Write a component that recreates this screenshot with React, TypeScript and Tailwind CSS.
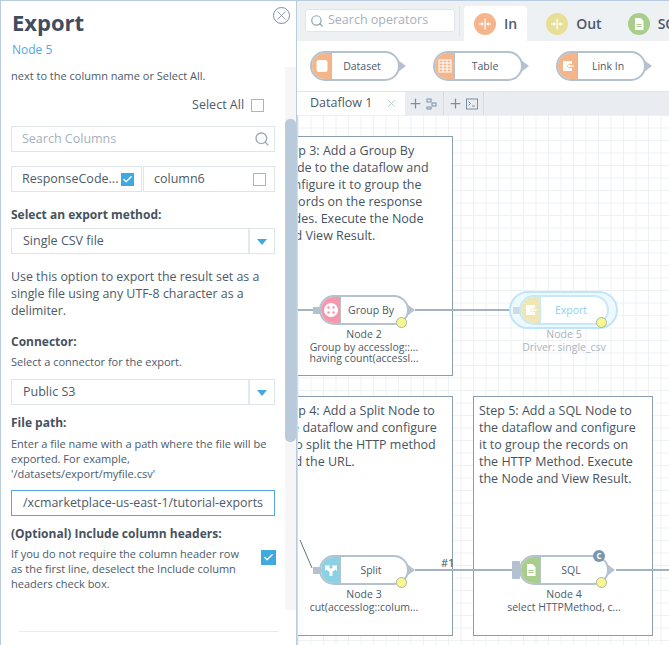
import React from "react";
import { Search, X, Plus, Check } from "lucide-react";

const Arrows = ({ size = 14 }: { size?: number }) => (
  <svg width={size} height={size} viewBox="0 0 14 14" fill="none" stroke="white" strokeWidth="1.2">
    <path d="M7 1.500v11M1 7h3.600M13 7H9.400M3.400 5.600 5 7 3.400 8.400M10.600 5.600 9 7l1.600 1.400" />
  </svg>
);
const FileIcon = ({ size = 14 }: { size?: number }) => (
  <svg width={size} height={size} viewBox="0 0 14 14" fill="white">
    <path d="M3 1h5.500L11.500 4v9H3z" />
    <path d="M4.500 7.500h5M4.500 9.500h5" stroke="#a9cd8b" strokeWidth="1" />
  </svg>
);
const LinkIcon = ({ color }: { color: string }) => (
  <svg width="14" height="14" viewBox="0 0 14 14" fill="none">
    <path d="M2 2h9v3H8L6 7l2 2h3v3H2z" fill="white" />
    <path d="M6 7l3-2.500V6h4v2H9v1.500z" fill="white" stroke={color} strokeWidth="0.6" />
  </svg>
);
const TableIcon = () => (
  <svg width="14" height="14" viewBox="0 0 14 14" fill="none" stroke="white" strokeWidth="1">
    <rect x="1" y="1" width="12" height="12" />
    <path d="M1 4h12M1 7h12M1 10h12M5 1v12M9 1v12" />
  </svg>
);
const DbIcon = () => (
  <svg width="14" height="14" viewBox="0 0 14 14" fill="white">
    <rect x="1.500" y="1" width="11" height="12" rx="2.500" />
  </svg>
);
const GroupIcon = () => (
  <svg width="16" height="16" viewBox="0 0 16 16">
    <circle cx="8" cy="8" r="7" fill="white" />
    <g fill="#f797ab">
      <circle cx="5.500" cy="5.500" r="1.200" />
      <circle cx="10.500" cy="5.500" r="1.200" />
      <circle cx="5.500" cy="10.500" r="1.200" />
      <circle cx="10.500" cy="10.500" r="1.200" />
    </g>
  </svg>
);
const SplitIcon = () => (
  <svg width="14" height="14" viewBox="0 0 14 14" fill="white">
    <path d="M5.500 13V9L2.500 6.500 1 8V2.500h5.500L5 4l2 2 2-2-1.500-1.500H13V8l-1.500-1.500L8.500 9v4z" />
  </svg>
);

const CheckBox = ({ checked, className = "" }: { checked?: boolean; className?: string }) =>
  checked ? (
    <span className={`flex items-center justify-center w-[13px] h-[13px] shrink-0 bg-[#3fa9e0] ${className}`}>
      <Check size={11} color="white" strokeWidth={3} />
    </span>
  ) : (
    <span className={`block w-[13px] h-[13px] shrink-0 border border-[#8dbde2] bg-white ${className}`} />
  );

const Caret = () => (
  <span className="flex items-center justify-center w-[26px] h-full border-l-2 border-[#e3e8ed]">
    <span className="block w-0 h-0 border-l-[5px] border-r-[5px] border-t-[6px] border-l-transparent border-r-transparent border-t-[#3fa9e0] mt-[2px]" />
  </span>
);

const Select = ({ value }: { value: string }) => (
  <div className="flex items-center h-[26px] border border-[#dfe4ea] bg-white">
    <span className="flex-1 pl-[11px] text-[12.5px] text-[#4c5a69]">{value}</span>
    <Caret />
  </div>
);

const Label = ({ children, className = "" }: { children: React.ReactNode; className?: string }) => (
  <div className={`text-[12px] leading-[17px] font-bold text-[#46535f] ${className}`}>{children}</div>
);

function Panel() {
  return (
    <aside className="relative z-10 flex flex-col w-[297px] h-full shrink-0 border-t border-l border-r border-[#b9cbde] bg-white">
      <div className="relative h-[66px] shrink-0 pl-[11px]">
        <div className="pt-[3px] text-[22px] leading-[36px] font-bold text-[#3f4e5e]">Export</div>
        <div className="mt-[1px] text-[12px] leading-[17px] text-[#52a7e0]">Node 5</div>
        <span className="absolute right-[6px] top-[6px] flex items-center justify-center w-[17px] h-[17px] rounded-full border-[1.5px] border-[#7b8ea3]">
          <X size={15} color="#7b8ea3" strokeWidth={1.3} />
        </span>
      </div>
      <div className="flex h-[543px] shrink-0">
        <div className="w-[285px] pl-[10px] pr-[10px] text-[#4c5a69]">
          <div className="text-[11px] leading-[17px]">next to the column name or Select All.</div>
          <div className="flex items-center justify-end gap-[7px] mt-[12px] pr-[11px] h-[18px] text-[12.5px]">
            <span>Select All</span>
            <CheckBox />
          </div>
          <div className="flex items-center justify-between mt-[12px] h-[26px] pl-[10px] pr-[4px] border border-[#dfe4ea] text-[12.5px] text-[#a6b1bc]">
            <span>Search Columns</span>
            <Search size={16} color="#98a9b8" />
          </div>
          <div className="flex gap-[1px] mt-[14px] h-[26px] text-[12.5px]">
            <div className="flex items-center justify-between w-[131px] pl-[10px] pr-[7px] border border-[#dfe4ea]">
              <span>ResponseCode...</span>
              <CheckBox checked />
            </div>
            <div className="flex items-center justify-between flex-1 pl-[10px] pr-[8px] border border-[#dfe4ea]">
              <span>column6</span>
              <CheckBox />
            </div>
          </div>
          <Label className="mt-[14px]">Select an export method:</Label>
          <div className="mt-[5px]"><Select value="Single CSV file" /></div>
          <p className="mt-[14px] text-[12.4px] leading-[17px]">
            Use this option to export the result set as a<br />single file using any UTF-8 character as a<br />delimiter.
          </p>
          <Label className="mt-[14px]">Connector:</Label>
          <div className="mt-[3px] text-[11px] leading-[17px]">Select a connector for the export.</div>
          <div className="mt-[9px]"><Select value="Public S3" /></div>
          <Label className="mt-[9px]">File path:</Label>
          <p className="mt-[5px] text-[11px] leading-[15px] whitespace-nowrap">
            Enter a file name with a path where the file will be<br />exported. For example,<br />'/datasets/export/myfile.csv'
          </p>
          <div className="flex items-center mt-[9px] h-[26px] pl-[11px] border border-[#52a7e0] text-[12.4px] whitespace-nowrap overflow-hidden">
            /xcmarketplace-us-east-1/tutorial-exports
          </div>
          <Label className="mt-[9px]">(Optional) Include column headers:</Label>
          <div className="flex justify-between mt-[4px]">
            <p className="text-[11px] leading-[15px]">
              If you do not require the column header row<br />as the first line, deselect the Include column<br />headers check box.
            </p>
            <CheckBox checked className="w-[15px] h-[15px] mt-[4px] -mr-[1px]" />
          </div>
        </div>
        <div className="w-[11px] h-full bg-[#f6f6f6]">
          <div className="mt-[52px] h-[323px] rounded-[5px] bg-[#b9cada]" />
        </div>
      </div>
      <div className="mx-[18px] mt-[21px] border-t border-[#e7eaee]" />
    </aside>
  );
}

function Tab({ label, color, active, icon }: { label: string; color: string; active?: boolean; icon: React.ReactNode }) {
  return (
    <div className={`flex items-center gap-[8px] h-[35px] shrink-0 px-[10px] rounded-t-[4px] text-[14px] font-semibold text-[#4c5a69] ${active ? "bg-white" : ""}`}>
      <span className="flex items-center justify-center w-[22px] h-[22px] rounded-full" style={{ background: color }}>{icon}</span>
      {label}
    </div>
  );
}

function Pill({ label, color, icon, width = 90, muted, children }: { label: string; color: string; icon: React.ReactNode; width?: number; muted?: boolean; children?: React.ReactNode }) {
  return (
    <div className="relative flex h-[30px] shrink-0" style={{ width }}>
      <div className={`flex w-full h-full rounded-l-[15px] rounded-r-[15px] border-2 overflow-hidden bg-white ${muted ? "border-[#c5e9f7]" : "border-[#b4c2d0]"}`}>
        <span className={`flex items-center justify-center w-[20px] border-r shrink-0 ${muted ? "border-[#c5e9f7]" : "border-[#b4c2d0]"}`} style={{ background: color }}>{icon}</span>
        <span className={`flex-1 flex items-center justify-center pr-[6px] pt-[1px] text-[10.5px] ${muted ? "text-[#8ed0ef]" : "text-[#4c5a69]"}`}>{label}</span>
      </div>
      {!muted && (
        <span className="absolute left-full top-1/2 -translate-y-1/2 -ml-[2px] w-0 h-0 border-y-[6px] border-l-[8px] border-y-transparent border-l-[#b4c2d0]" />
      )}
      {children}
    </div>
  );
}

function CanvasNode({ left, top, label, color, icon, lines, muted, port, badge }: { left: number; top: number; label: string; color: string; icon: React.ReactNode; lines: string[]; muted?: boolean; port?: boolean; badge?: boolean }) {
  return (
    <div className="absolute w-[90px]" style={{ left, top }}>
      <span className={`absolute ${port ? "top-[6px] -left-[7px] w-[8px] h-[18px] rounded-[1px]" : "top-[12px] -left-[6px] w-[7px] h-[7px]"} ${muted ? "bg-[#cfdae3]" : "bg-[#b4c2d0]"}`} />
      <Pill label={label} color={color} icon={icon} muted={muted}>
        <span className="absolute right-[2px] -bottom-[3px] w-[11px] h-[11px] rounded-full bg-[#fbf78f] border border-[#a9b7a4]" />
        {badge && (
          <span className="absolute right-[4px] -top-[5px] flex items-center justify-center w-[12px] h-[12px] rounded-full bg-[#7b95ab] text-[8px] font-bold text-white">C</span>
        )}
      </Pill>
      <div className={`absolute -left-[20px] w-[130px] top-[34px] text-center text-[10.5px] leading-[11px] whitespace-nowrap ${muted ? "text-[#aab4bd]" : "text-[#4c5a69]"}`}>
        {lines.map((l, i) => (
          <div key={l} className={i === 0 ? "mb-[2px]" : ""}>{l}</div>
        ))}
      </div>
    </div>
  );
}

function StepBox({ left, top, height, lines, inset }: { left: number; top: number; height: number; lines: string[]; inset?: boolean }) {
  return (
    <div className={`absolute w-[180px] border border-[#8b9db0] bg-white pt-[5px] text-[12.5px] leading-[17px] text-[#46535f] whitespace-nowrap ${inset ? "pl-[6px]" : "pl-[5px]"}`} style={{ left, top, height }}>
      {lines.map((l) => (
        <div key={l}>{l}</div>
      ))}
    </div>
  );
}

export default function App() {
  return (
    <div className="flex w-[669px] h-[645px] overflow-hidden bg-white" style={{ fontFamily: '"Open Sans", sans-serif' }}>
      <Panel />
      <main className="flex flex-col flex-1 min-w-0 h-full">
        <header className="flex items-end h-[41px] shrink-0 border-t border-[#b9cbde] bg-[#eef1f4] pl-[8px] overflow-hidden">
          <div className="flex items-center gap-[4px] w-[150px] h-[23px] mb-[9px] px-[4px] rounded-[3px] border border-[#e0e5ea] bg-white text-[12.5px] text-[#a6b1bc] shrink-0">
            <Search size={14} color="#8fa3b5" />
            Search operators
          </div>
          <span className="w-[1px] h-[30px] mx-[4px] mb-[5px] bg-[#dfe4e9] shrink-0" />
          <Tab label="In" color="#f5b58a" active icon={<Arrows />} />
          <div className="w-[9px] shrink-0" />
          <Tab label="Out" color="#e8df96" icon={<Arrows />} />
          <div className="w-[6px] shrink-0" />
          <Tab label="SQL" color="#a9cd8b" icon={<FileIcon />} />
        </header>
        <section className="flex items-center gap-[33px] h-[50px] shrink-0 pl-[13px] overflow-hidden bg-white">
          <Pill label="Dataset" color="#f5b58a" icon={<DbIcon />} />
          <Pill label="Table" color="#f5b58a" icon={<TableIcon />} />
          <Pill label="Link In" color="#f5b58a" icon={<LinkIcon color="#f5b58a" />} />
        </section>
        <nav className="flex items-stretch h-[24px] shrink-0 border-t border-[#dfe4e9] bg-[#e9edf1]">
          <div className="flex items-center justify-between w-[108px] pl-[13px] pr-[8px] bg-white text-[12.5px] font-medium text-[#4c5a69]">
            Dataflow 1
            <X size={11} color="#b9c4ce" />
          </div>
          <div className="flex items-center gap-[3px] w-[39px] pl-[3px] border-r border-[#d5dbe1]">
            <Plus size={15} color="#7b8ea3" strokeWidth={2} />
            <svg width="11" height="12" viewBox="0 0 11 12" fill="none" stroke="#7b8ea3"><rect x="1" y="1" width="4" height="3" /><rect x="6" y="5" width="4" height="3" /><rect x="1" y="9" width="4" height="2" /></svg>
          </div>
          <div className="flex items-center gap-[3px] w-[40px] pl-[4px] border-r border-[#d5dbe1]">
            <Plus size={15} color="#7b8ea3" strokeWidth={2} />
            <svg width="12" height="12" viewBox="0 0 12 12" fill="none" stroke="#7b8ea3"><rect x="0.5" y="1" width="11" height="10" /><path d="M2.500 3.500 4.500 5.500 2.500 7.500M6 8h3" /></svg>
          </div>
        </nav>
        <div className="relative flex-1 overflow-hidden bg-white bg-[linear-gradient(#eef1f3_1px,transparent_1px),linear-gradient(90deg,#eef1f3_1px,transparent_1px)] bg-[size:12.5px_12.5px] border-l border-[#d5dbe1]">
          <StepBox left={-25} top={21} height={240} inset lines={["Step 3: Add a Group By", "Node to the dataflow and", "configure it to group the", "records on the response", "codes. Execute the Node", "and View Result."]} />
          <StepBox left={-25} top={281} height={240} inset lines={["Step 4: Add a Split Node to", "the dataflow and configure", "it to split the HTTP method", "and the URL."]} />
          <StepBox left={175} top={281} height={240} lines={["Step 5: Add a SQL Node to", "the dataflow and configure", "it to group the records on", "the HTTP Method. Execute", "the Node and View Result."]} />
          <svg className="absolute inset-0" width="372" height="530" fill="none" stroke="#a3b3c2">
            <path d="M0 195h15M117 195h97M117 455h97M318 455h54" strokeWidth="2" />
            <path d="M2 425 14 453" strokeWidth="1" stroke="#66727e" />
          </svg>
          <div className="absolute left-[143px] top-[441px] text-[11px] leading-[14px] text-[#46535f]">#1</div>
          <CanvasNode left={21} top={180} label="Group By" color="#f797ab" icon={<GroupIcon />} lines={["Node 2", "Group by accesslog::...", "having count(accessl..."]} />
          <div className="absolute left-[211px] top-[176px] w-[109px] h-[38px] rounded-[19px] border-2 border-[#bfe6f8] bg-[#eef9fe]" />
          <CanvasNode left={221} top={180} label="Export" color="#efe5b5" icon={<LinkIcon color="#efe5b5" />} lines={["Node 5", "Driver: single_csv"]} muted />
          <CanvasNode left={21} top={440} label="Split" color="#8ad1e3" icon={<SplitIcon />} lines={["Node 3", "cut(accesslog::colum..."]} />
          <CanvasNode left={221} top={440} label="SQL" color="#a9cd8b" icon={<FileIcon />} lines={["Node 4", "select HTTPMethod, c..."]} port badge />
        </div>
      </main>
    </div>
  );
}
